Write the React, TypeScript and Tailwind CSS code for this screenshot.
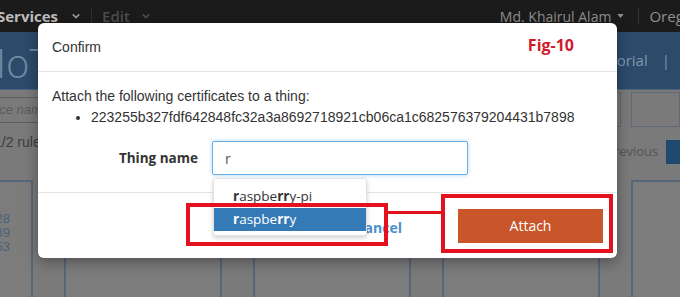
import React from 'react';

const Chevron: React.FC<{ className?: string }> = ({ className }) => (
  <svg viewBox="0 0 10 6" className={className} fill="none" stroke="currentColor" strokeWidth="2">
    <path d="M1 1l4 4 4-4" />
  </svg>
);

const Card: React.FC<{ children?: React.ReactNode }> = ({ children }) => (
  <div className="w-[158px] shrink-0 h-full border-2 border-b-0 border-[#56677a] bg-[#7c7c7c] flex flex-col items-end justify-start pt-[30px] pr-[21px] text-[13px] leading-[14px] text-[#4c6178]">
    {children}
  </div>
);

const App: React.FC = () => {
  const hash = '223255b327fdf642848fc32a3a8692718921cb06ca1c682576379204431b7898';

  return (
    <div className="relative w-[680px] h-[297px] overflow-hidden bg-[#7a7a7a] font-['Liberation_Sans',Arial,sans-serif]">
      {/* top navigation (dimmed) */}
      <div className="h-[32px] bg-[#1b1b1b] flex items-center overflow-hidden text-[15px] font-['Open_Sans',sans-serif]">
        <span className="ml-[-3px] font-bold text-[#bdbdbd]">Services</span>
        <Chevron className="w-[8px] h-[6px] ml-[14px] text-[#9a9a9a]" />
        <div className="w-px h-[16px] bg-[#2e2e2e] ml-[11px]" />
        <span className="ml-[10px] font-semibold text-[#4d4d4d]">Edit</span>
        <Chevron className="w-[8px] h-[6px] ml-[12px] text-[#4d4d4d]" />
        <div className="ml-auto flex items-center shrink-0 mr-[-22px]">
          <span className="text-[14px] text-[#8f8f8f]">Md. Khairul Alam</span>
          <svg viewBox="0 0 8 5" className="w-[7px] h-[4px] ml-[6px] text-[#8f8f8f]" fill="currentColor">
            <path d="M0 0h8L4 5z" />
          </svg>
          <div className="w-px h-[16px] bg-[#333] ml-[14px]" />
          <span className="ml-[10px] text-[15px] text-[#8f8f8f] whitespace-nowrap">Oregon</span>
        </div>
      </div>

      {/* blue header band */}
      <div className="h-[58px] bg-[#2c4a6a] border-b border-[#4b6580] flex items-center justify-between">
        <span className="ml-[-4px] mt-[4px] text-[40px] font-light leading-none text-[#6e8aa6] font-['Open_Sans',sans-serif]">IoT</span>
        <div className="flex items-center mr-[10px] text-[15px] text-[#8196ab] font-['Open_Sans',sans-serif]">
          <span>Tutorial</span>
          <span className="ml-[14px]">|</span>
        </div>
      </div>

      {/* dimmed page body */}
      <div className="flex justify-between">
        <div className="w-[60px]">
          <div className="mt-[7px] h-[26px] w-[40px] border border-[#5c5c5c] border-l-0 flex items-center overflow-hidden">
            <span className="ml-[-8px] italic text-[13px] text-[#5a5a5a] whitespace-nowrap">ace name</span>
          </div>
          <div className="mt-[9px] ml-[-6px] text-[14px] text-[#3c3c3c] whitespace-nowrap">1/2 rules</div>
        </div>
        <div className="w-[70px]">
          <div className="mt-[2px] flex gap-[10px]">
            <div className="w-[13px] h-[35px] border border-[#5f6a76]" />
            <div className="w-[60px] h-[35px] border border-[#5f6a76]" />
          </div>
          <div className="mt-[13px] flex items-center">
            <span className="ml-[-4px] text-[13px] text-[#555] font-['Open_Sans',sans-serif]">Previous</span>
            <div className="ml-[8px] w-[20px] h-[24px] bg-[#1f4a70]" />
          </div>
        </div>
      </div>

      {/* cards grid */}
      <div className="absolute left-[-125px] top-[180px] h-[120px] flex gap-[31px]">
        <Card>
          <span>28</span>
          <span>39</span>
          <span>53</span>
        </Card>
        <Card />
        <Card />
        <Card />
        <Card />
      </div>

      {/* modal */}
      <div className="absolute left-[38px] top-[23px] w-[579px] h-[235px] bg-white rounded-[6px] shadow-[0_4px_14px_rgba(0,0,0,0.35)] flex flex-col">
        <div className="h-[49px] border-b border-[#e5e5e5] px-[14px] flex items-center justify-between">
          <span className="text-[14px] text-[#333]">Confirm</span>
          <span className="mr-[29px] mt-[-5px] text-[16px] font-bold text-[#d4192b] font-['Open_Sans',sans-serif]">Fig-10</span>
        </div>

        <div className="h-[121px] border-b border-[#e5e5e5] px-[14px] pt-[15px] text-[14px] text-[#333]">
          <p className="leading-[18px]">Attach the following certificates to a thing:</p>
          <ul className="list-disc pl-[39px] mt-[3px] leading-[18px]">
            <li>{hash}</li>
          </ul>
          <div className="mt-[15px] flex items-center">
            <label className="w-[146px] text-right text-[13.5px] font-bold text-[#333] font-['Open_Sans',sans-serif]">Thing name</label>
            <div className="ml-[14px] w-[256px] h-[34px] border border-[#66afe9] rounded-[2px] shadow-[0_0_4px_rgba(102,175,233,0.5)] flex items-center px-[12px] text-[14px] text-[#555] font-['Open_Sans',sans-serif]">
              r
            </div>
          </div>
        </div>

        <div className="flex-1 flex items-center justify-end pr-[14px] font-['Open_Sans',sans-serif]">
          <span className="mt-[4px] text-[14px] font-bold text-[#4a90c9]">Cancel</span>
          <button className="ml-[56px] w-[145px] h-[34px] bg-[#c9552a] text-white text-[14px]">Attach</button>
        </div>
      </div>

      {/* autocomplete dropdown */}
      <div className="absolute left-[213px] top-[178px] w-[154px] h-[58px] bg-white border border-[#e2e2e2] rounded-[3px] shadow-[0_2px_5px_rgba(0,0,0,0.18)] pt-[6px] text-[13.5px] font-['Open_Sans',sans-serif]">
        <div className="h-[22px] pl-[19px] flex items-center text-[#333]">
          <b>r</b>aspbe<b>rr</b>y-pi
        </div>
        <div className="mt-[1px] h-[23px] pl-[19px] flex items-center bg-[#337ab7] text-white">
          <b>r</b>aspbe<b>rr</b>y
        </div>
      </div>

      {/* annotation marks */}
      <div className="absolute left-[186px] top-[203px] w-[202px] h-[43px] border-4 border-[#e3121e]" />
      <div className="absolute left-[388px] top-[211px] w-[53px] h-[3px] bg-[#e3121e]" />
      <div className="absolute left-[441px] top-[194px] w-[172px] h-[59px] border-4 border-[#e3121e]" />
    </div>
  );
};

export default App;
